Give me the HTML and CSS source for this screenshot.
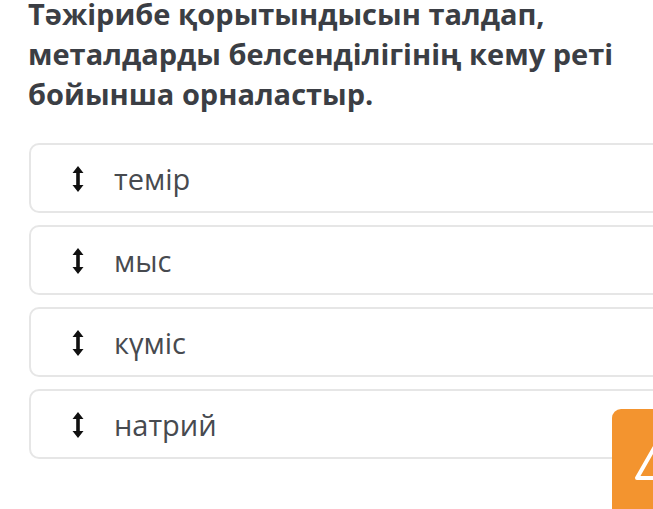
FILE: index.html
```html
<!DOCTYPE html>
<html lang="kk">
<head>
    <meta charset="UTF-8">
    <meta name="viewport" content="width=device-width, initial-scale=1.0">
    <title>Тапсырма</title>
    <link rel="stylesheet" href="styles.css">
</head>
<body>

    <h1 class="question">Тәжірибе қорытындысын талдап, металдарды белсенділігінің кему реті бойынша орналастыр.</h1>

    <div class="options">
        <div class="option">
            <svg class="drag" viewBox="0 0 12 26" width="12" height="26"><path d="M6 0 L11.5 7 H7.8 V19 H11.5 L6 26 L0.5 19 H4.2 V7 H0.5 Z"/></svg>
            <span>темір</span>
        </div>
        <div class="option">
            <svg class="drag" viewBox="0 0 12 26" width="12" height="26"><path d="M6 0 L11.5 7 H7.8 V19 H11.5 L6 26 L0.5 19 H4.2 V7 H0.5 Z"/></svg>
            <span>мыс</span>
        </div>
        <div class="option">
            <svg class="drag" viewBox="0 0 12 26" width="12" height="26"><path d="M6 0 L11.5 7 H7.8 V19 H11.5 L6 26 L0.5 19 H4.2 V7 H0.5 Z"/></svg>
            <span>күміс</span>
        </div>
        <div class="option">
            <svg class="drag" viewBox="0 0 12 26" width="12" height="26"><path d="M6 0 L11.5 7 H7.8 V19 H11.5 L6 26 L0.5 19 H4.2 V7 H0.5 Z"/></svg>
            <span>натрий</span>
        </div>
    </div>

    <!-- report button -->
    <div class="report">
        <svg viewBox="0 0 80 80" width="80" height="80"><path d="M40 10 L72 66 H8 Z" fill="none" stroke="#fff" stroke-width="4" stroke-linejoin="round"/></svg>
    </div>

</body>
</html>
```

FILE: styles.css
```css
* { margin: 0; padding: 0; box-sizing: border-box; }

body {
    background: #fff;
    font-family: "Open Sans", "Noto Sans", sans-serif;
    overflow: hidden;
    width: 653px;
    height: 509px;
    position: relative;
}

.question {
    margin: -6px 0 0 28px;
    width: 610px;
    font-size: 29px;
    line-height: 40px;
    font-weight: 700;
    color: #3b3e44;
}

.options {
    margin: 29px 0 0 29px;
    display: flex;
    flex-direction: column;
    gap: 12px;
    width: 700px;
}

.option {
    height: 70px;
    border: 2px solid #e6e6e6;
    border-radius: 10px;
    display: flex;
    align-items: center;
    padding-left: 41px;
    font-size: 29px;
    color: #474a4f;
}

.drag {
    fill: #111;
    margin: 2px 30px 0 0;
}

.report {
    position: absolute;
    left: 612px;
    top: 409px;
    width: 80px;
    height: 110px;
    background: #f3942f;
    border-radius: 9px;
}

.report svg {
    margin: 3px 0 0 17px;
}
```
